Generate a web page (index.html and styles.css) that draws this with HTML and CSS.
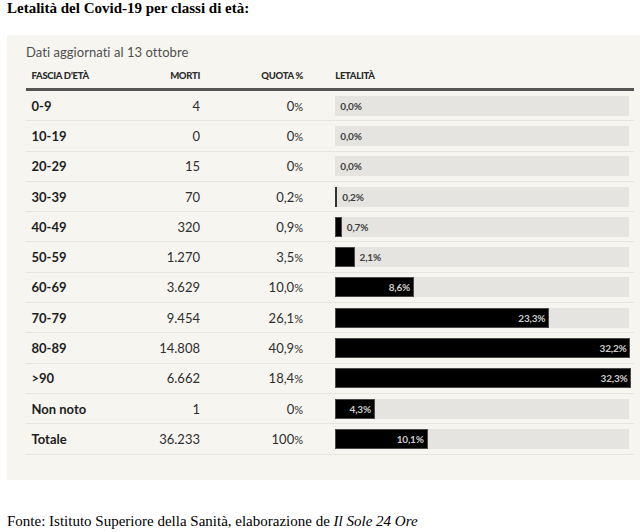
FILE: index.html
```html
<!DOCTYPE html>
<html lang="it">
<head>
<meta charset="utf-8">
<title>Letalità del Covid-19 per classi di età</title>
<link rel="stylesheet" href="styles.css">
</head>
<body>
<h1 class="title">Letalità del Covid-19 per classi di età:</h1>
<div class="panel">
  <div class="caption">Dati aggiornati al 13 ottobre</div>
  <div class="table">
    <div class="row head">
      <span class="age">FASCIA D’ETÀ</span>
      <span class="num">MORTI</span>
      <span class="num">QUOTA %</span>
      <span class="barcell">LETALITÀ</span>
    </div>
    <div class="row">
      <span class="age">0-9</span><span class="num">4</span><span class="num">0<small>%</small></span>
      <span class="barcell"><span class="track"><span class="lbl out">0,0%</span></span></span>
    </div>
    <div class="row">
      <span class="age">10-19</span><span class="num">0</span><span class="num">0<small>%</small></span>
      <span class="barcell"><span class="track"><span class="lbl out">0,0%</span></span></span>
    </div>
    <div class="row">
      <span class="age">20-29</span><span class="num">15</span><span class="num">0<small>%</small></span>
      <span class="barcell"><span class="track"><span class="lbl out">0,0%</span></span></span>
    </div>
    <div class="row">
      <span class="age">30-39</span><span class="num">70</span><span class="num">0,2<small>%</small></span>
      <span class="barcell"><span class="track"><span class="fill thin" style="width:2px"></span><span class="lbl out">0,2%</span></span></span>
    </div>
    <div class="row">
      <span class="age">40-49</span><span class="num">320</span><span class="num">0,9<small>%</small></span>
      <span class="barcell"><span class="track"><span class="fill" style="width:6.5px"></span><span class="lbl out">0,7%</span></span></span>
    </div>
    <div class="row">
      <span class="age">50-59</span><span class="num">1.270</span><span class="num">3,5<small>%</small></span>
      <span class="barcell"><span class="track"><span class="fill" style="width:19.3px"></span><span class="lbl out">2,1%</span></span></span>
    </div>
    <div class="row">
      <span class="age">60-69</span><span class="num">3.629</span><span class="num">10,0<small>%</small></span>
      <span class="barcell"><span class="track"><span class="fill" style="width:78.8px"><span class="lbl in">8,6%</span></span></span></span>
    </div>
    <div class="row">
      <span class="age">70-79</span><span class="num">9.454</span><span class="num">26,1<small>%</small></span>
      <span class="barcell"><span class="track"><span class="fill" style="width:214px"><span class="lbl in">23,3%</span></span></span></span>
    </div>
    <div class="row">
      <span class="age">80-89</span><span class="num">14.808</span><span class="num">40,9<small>%</small></span>
      <span class="barcell"><span class="track"><span class="fill" style="width:295.2px"><span class="lbl in">32,2%</span></span></span></span>
    </div>
    <div class="row">
      <span class="age">&gt;90</span><span class="num">6.662</span><span class="num">18,4<small>%</small></span>
      <span class="barcell"><span class="track"><span class="fill" style="width:296.2px"><span class="lbl in">32,3%</span></span></span></span>
    </div>
    <div class="row">
      <span class="age">Non noto</span><span class="num">1</span><span class="num">0<small>%</small></span>
      <span class="barcell"><span class="track"><span class="fill" style="width:39.6px"><span class="lbl in">4,3%</span></span></span></span>
    </div>
    <div class="row">
      <span class="age">Totale</span><span class="num">36.233</span><span class="num">100<small>%</small></span>
      <span class="barcell"><span class="track"><span class="fill" style="width:92.4px"><span class="lbl in">10,1%</span></span></span></span>
    </div>
  </div>
</div>
<p class="source">Fonte: Istituto Superiore della Sanità, elaborazione de <em>Il Sole 24 Ore</em></p>
</body>
</html>
```

FILE: styles.css
```css
html, body {
  margin: 0;
  padding: 0;
  background: #ffffff;
}

body {
  padding-left: 7px;
  font-family: "Liberation Serif", "Times New Roman", serif;
  color: #000;
}

.title {
  margin: 0;
  font-size: 15px;
  line-height: 17px;
  font-weight: bold;
}

.panel {
  margin-top: 18px;
  width: 633px;
  box-sizing: border-box;
  height: 445px;
  padding: 9px 6px 0 19px;
  background: #f6f5f0;
  font-family: Lato, "Open Sans", sans-serif;
}

.caption {
  font-size: 13px;
  line-height: 16px;
  color: #4f4f4f;
  letter-spacing: 0.05px;
}

.table {
  margin-top: 11px;
}

.row {
  display: grid;
  grid-template-columns: 105px 69px 103px 1fr;
  align-items: center;
  box-sizing: border-box;
  height: 30.3px;
  border-bottom: 1px solid #e6e5e0;
}

.row.head {
  height: 20px;
  align-items: start;
  border-bottom: 3px solid #555;
  font-size: 9.5px;
  line-height: 10px;
  font-weight: 900;
  color: #2a2a2a;
  letter-spacing: -0.3px;
}

.age {
  padding-left: 5.5px;
  font-size: 13px;
  font-weight: bold;
  color: #1e1e1e;
}

.head .age {
  font-size: 9.5px;
  font-weight: 900;
  color: #2a2a2a;
}

.num {
  text-align: right;
  font-size: 13px;
  color: #2e2e2e;
}

.head .num {
  font-size: 9.5px;
}

.num small {
  font-size: 11px;
}

.barcell {
  padding-left: 32.3px;
  padding-right: 5px;
}

.track {
  display: flex;
  align-items: center;
  height: 20px;
  background: #e5e4e0;
}

.fill {
  display: flex;
  align-items: center;
  justify-content: flex-end;
  box-sizing: border-box;
  height: 20px;
  flex: none;
  background: #000;
  border: 1px solid #4a4a4a;
}

.fill.thin {
  background: #333;
  border: none;
}

.lbl {
  font-size: 10px;
  font-weight: bold;
  white-space: nowrap;
  letter-spacing: -0.2px;
}

.lbl.out {
  margin-left: 5px;
  color: #3e3e3e;
}

.lbl.in {
  padding-right: 3px;
  color: #cccccc;
}

.source {
  margin: 33px 0 0;
  font-size: 15px;
  line-height: 17px;
}
```
